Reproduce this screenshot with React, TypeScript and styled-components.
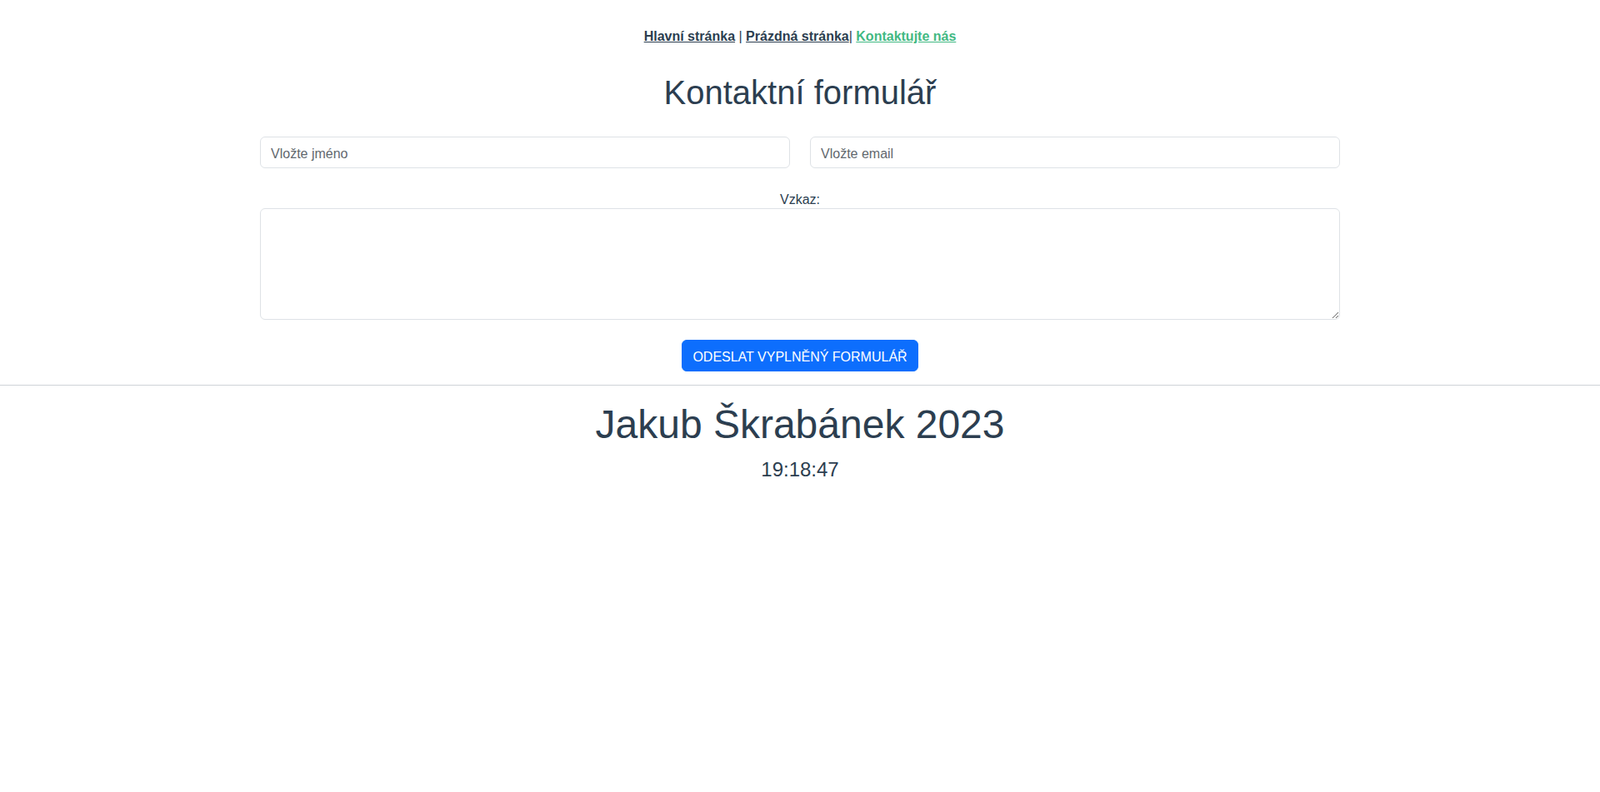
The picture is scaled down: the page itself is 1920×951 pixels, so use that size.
import React from "react";
import styled, { createGlobalStyle } from "styled-components";

const GlobalStyle = createGlobalStyle`
  *, *::before, *::after {
    box-sizing: border-box;
  }
  body {
    margin: 0;
    background: #fff;
    font-family: "Liberation Sans", Arial, Helvetica, sans-serif;
    font-size: 16px;
    line-height: 1.5;
    color: #2c3e50;
    text-align: center;
    -webkit-font-smoothing: antialiased;
  }
`;

const Nav = styled.nav`
  padding: 32px 30px 28px;
  font-size: 16px;
  line-height: 24px;
`;

const NavLink = styled.a<{ $active?: boolean }>`
  font-weight: bold;
  color: ${(p) => (p.$active ? "#42b983" : "#2c3e50")};
  text-decoration: underline;
  cursor: pointer;
`;

const Container = styled.div`
  max-width: 1320px;
  margin: 0 auto;
  padding: 0 12px;
`;

const Title = styled.h1`
  margin: 3px 0 6px;
  font-size: 40px;
  font-weight: 500;
  line-height: 1.2;
`;

const Form = styled.form`
  padding-top: 23px;
`;

const FieldRow = styled.div`
  display: grid;
  grid-template-columns: 1fr 1fr;
  gap: 24px;
`;

const Input = styled.input`
  display: block;
  width: 100%;
  height: 38px;
  padding: 8px 12px 4px;
  font-family: inherit;
  font-size: 16px;
  line-height: 1.5;
  color: #212529;
  background: #fff;
  border: 1px solid #dee2e6;
  border-radius: 6px;
  outline: none;

  &::placeholder {
    color: #62686e;
    opacity: 1;
  }
`;

const Label = styled.label`
  display: block;
  margin-top: 22px;
  padding-top: 6px;
  line-height: 20px;
`;

const TextArea = styled.textarea`
  display: block;
  width: 100%;
  height: 134px;
  padding: 6px 12px;
  font-family: inherit;
  font-size: 16px;
  line-height: 1.5;
  color: #212529;
  border: 1px solid #dee2e6;
  border-radius: 6px;
  resize: vertical;
  outline: none;
`;

const Submit = styled.button`
  margin-top: 24px;
  height: 38px;
  padding: 8px 12px 4px;
  font-family: inherit;
  font-size: 16px;
  line-height: 1.5;
  color: #fff;
  text-transform: uppercase;
  background: #0d6efd;
  border: 1px solid #0d6efd;
  border-radius: 6px;
  cursor: pointer;
`;

const Divider = styled.hr`
  margin: 16px 0;
  border: 0;
  border-top: 1px solid #cfd3d7;
`;

const Footer = styled.footer`
  padding-top: 2px;
`;

const Author = styled.h1`
  margin: 0 0 11px;
  font-size: 48px;
  font-weight: 500;
  line-height: 1.2;
`;

const Clock = styled.div`
  font-size: 24px;
  line-height: 1.2;
`;

export default function App() {
  return (
    <>
      <GlobalStyle />
      <Nav>
        <NavLink>Hlavní stránka</NavLink> | <NavLink>Prázdná stránka</NavLink>|{" "}
        <NavLink $active>Kontaktujte nás</NavLink>
      </Nav>
      <Container>
        <Title>Kontaktní formulář</Title>
        <Form onSubmit={(e) => e.preventDefault()}>
          <FieldRow>
            <Input type="text" placeholder="Vložte jméno" />
            <Input type="email" placeholder="Vložte email" />
          </FieldRow>
          <Label htmlFor="vzkaz">Vzkaz:</Label>
          <TextArea id="vzkaz" rows={5} />
          <Submit type="submit">Odeslat vyplněný formulář</Submit>
        </Form>
      </Container>
      <Divider />
      <Footer>
        <Author>Jakub Škrabánek 2023</Author>
        <Clock>19:18:47</Clock>
      </Footer>
    </>
  );
}
